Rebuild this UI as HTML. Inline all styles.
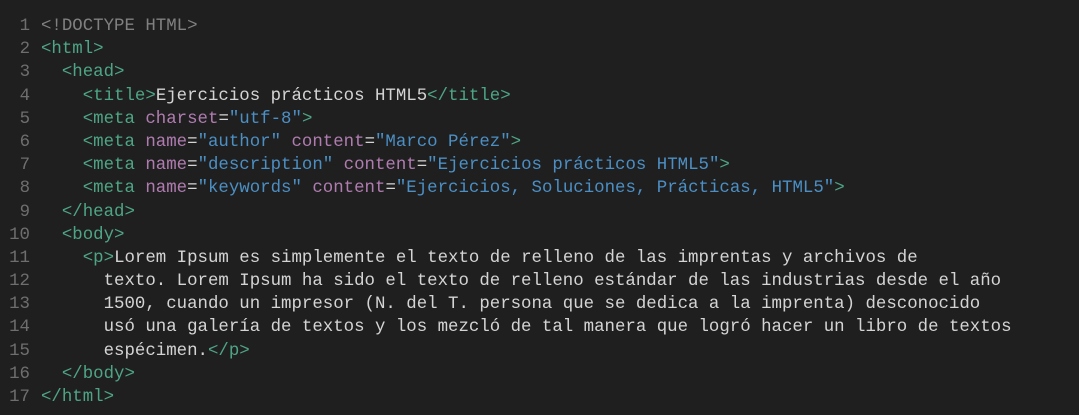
<!DOCTYPE html>
<html><head><meta charset="utf-8"><style>
html,body{margin:0;padding:0;background:#1f1f1f;width:1079px;height:415px;overflow:hidden}
.c{position:absolute;top:15px;left:0;font-family:"Liberation Mono",monospace;font-size:17.4px;line-height:23.2px;color:#d4d4d4}
.l{height:23.2px;white-space:pre}
.n{display:inline-block;width:30px;text-align:right;color:#6e6e6e;margin-right:11px}
.d{color:#808080}.t{color:#4ea585}.a{color:#b07cb0}.s{color:#4b8fc4}
</style></head><body><div class="c">
<div class="l"><span class="n">1</span><span class="d">&lt;!DOCTYPE HTML&gt;</span></div>
<div class="l"><span class="n">2</span><span class="t">&lt;html&gt;</span></div>
<div class="l"><span class="n">3</span>  <span class="t">&lt;head&gt;</span></div>
<div class="l"><span class="n">4</span>    <span class="t">&lt;title&gt;</span>Ejercicios prácticos HTML5<span class="t">&lt;/title&gt;</span></div>
<div class="l"><span class="n">5</span>    <span class="t">&lt;meta</span> <span class="a">charset</span>=<span class="s">"utf-8"</span><span class="t">&gt;</span></div>
<div class="l"><span class="n">6</span>    <span class="t">&lt;meta</span> <span class="a">name</span>=<span class="s">"author"</span> <span class="a">content</span>=<span class="s">"Marco Pérez"</span><span class="t">&gt;</span></div>
<div class="l"><span class="n">7</span>    <span class="t">&lt;meta</span> <span class="a">name</span>=<span class="s">"description"</span> <span class="a">content</span>=<span class="s">"Ejercicios prácticos HTML5"</span><span class="t">&gt;</span></div>
<div class="l"><span class="n">8</span>    <span class="t">&lt;meta</span> <span class="a">name</span>=<span class="s">"keywords"</span> <span class="a">content</span>=<span class="s">"Ejercicios, Soluciones, Prácticas, HTML5"</span><span class="t">&gt;</span></div>
<div class="l"><span class="n">9</span>  <span class="t">&lt;/head&gt;</span></div>
<div class="l"><span class="n">10</span>  <span class="t">&lt;body&gt;</span></div>
<div class="l"><span class="n">11</span>    <span class="t">&lt;p&gt;</span>Lorem Ipsum es simplemente el texto de relleno de las imprentas y archivos de</div>
<div class="l"><span class="n">12</span>      texto. Lorem Ipsum ha sido el texto de relleno estándar de las industrias desde el año</div>
<div class="l"><span class="n">13</span>      1500, cuando un impresor (N. del T. persona que se dedica a la imprenta) desconocido</div>
<div class="l"><span class="n">14</span>      usó una galería de textos y los mezcló de tal manera que logró hacer un libro de textos</div>
<div class="l"><span class="n">15</span>      espécimen.<span class="t">&lt;/p&gt;</span></div>
<div class="l"><span class="n">16</span>  <span class="t">&lt;/body&gt;</span></div>
<div class="l"><span class="n">17</span><span class="t">&lt;/html&gt;</span></div>
</div></body></html>
